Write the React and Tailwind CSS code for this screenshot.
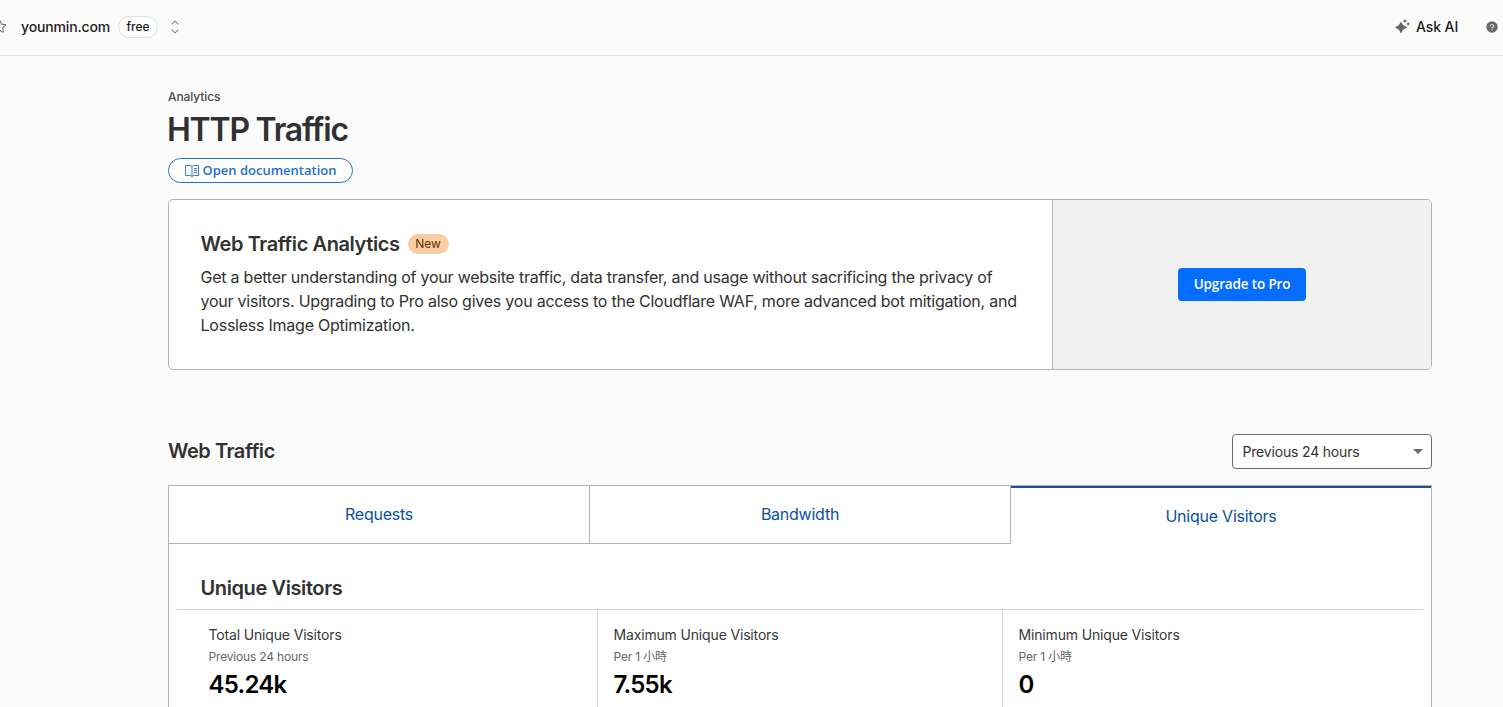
import React, { useState } from 'react';
import { PiStar, PiCaretUpDown, PiQuestionFill } from 'react-icons/pi';

const tabs = ['Requests', 'Bandwidth', 'Unique Visitors'];

const stats = [
  { label: 'Total Unique Visitors', period: 'Previous 24 hours', value: '45.24k' },
  { label: 'Maximum Unique Visitors', period: 'Per 1 小時', value: '7.55k' },
  { label: 'Minimum Unique Visitors', period: 'Per 1 小時', value: '0' },
];

function SparkleIcon() {
  return (
    <svg width="16" height="16" viewBox="0 0 16 16" fill="currentColor">
      <path d="M6 2.4 7.9 5.7Q8.2 6.3 8.8 6.6L12.4 8.4 8.8 10.2Q8.2 10.5 7.9 11.1L6 14.6 4.1 11.1Q3.8 10.5 3.2 10.2L-.2 8.4 3.2 6.6Q3.8 6.3 4.1 5.7Z" />
      <path d="M10 0 10.8 1.3 12.2 2 10.8 2.7 10 4 9.2 2.7 7.8 2 9.2 1.3ZM13.2 2.9 13.9 4.2 15.3 4.9 13.9 5.6 13.2 6.9 12.5 5.6 11.1 4.9 12.5 4.2Z" />
    </svg>
  );
}

function BookIcon() {
  return (
    <svg width="14" height="14" viewBox="0 0 14 14" fill="none" stroke="currentColor" strokeWidth="0.9">
      <path d="M.5 1.5H5.5L7 2.4 8.5 1.5H13.5V11.5H8.5L7 12.3 5.5 11.5H.5ZM7 2.4V13M9 4.5H12M9 6.5H12M9 8.5H12" />
    </svg>
  );
}

function TopBar() {
  return (
    <header className="flex h-14 items-center justify-between border-b border-[#dedede] pb-0.5">
      <div className="-ml-2 flex items-center">
        <PiStar className="size-[15px] text-[#666]" />
        <span className="ml-3.5 w-[89px] text-sm font-medium tracking-[-0.15px] text-[#1d1d1d]">younmin.com</span>
        <span className="ml-2 flex h-[22px] w-10 items-center justify-center rounded-full border border-[#dedede] bg-white text-xs font-medium text-[#1d1d1d]">
          free
        </span>
        <PiCaretUpDown className="ml-[9px] size-4 text-[#777]" />
      </div>
      <div className="flex items-center pr-1">
        <span className="text-[#666]">
          <SparkleIcon />
        </span>
        <span className="ml-[5px] w-[42px] text-sm font-medium tracking-[-0.1px] whitespace-nowrap text-[#1d1d1d]">Ask AI</span>
        <PiQuestionFill className="ml-[27px] size-3.5 text-[#666]" />
      </div>
    </header>
  );
}

function UpgradeCard() {
  return (
    <section className="mt-4 flex h-[171px] overflow-hidden rounded-[5px] border border-[#b3b3b3] bg-white">
      <div className="w-[884px] shrink-0 border-r border-[#b3b3b3] pt-7 pr-8 pl-[31.5px]">
        <div className="flex h-8 items-center">
          <h2 className="text-xl font-semibold tracking-[-0.4px]">Web Traffic Analytics</h2>
          <span className="ml-2 flex h-5 w-[41px] items-center justify-center rounded-full bg-[#fbcda5] text-xs text-[#5c3001]">
            New
          </span>
        </div>
        <p className="mt-[5px] text-base tracking-[-0.235px]">
          Get a better understanding of your website traffic, data transfer, and usage without sacrificing the privacy of
          your visitors. Upgrading to Pro also gives you access to the Cloudflare WAF, more advanced bot mitigation, and
          Lossless Image Optimization.
        </p>
      </div>
      <div className="flex flex-1 items-center justify-center bg-[#f1f1f1]">
        <button className="h-[33px] w-32 rounded-[4px] bg-[#056dff] font-['Open_Sans',sans-serif] text-[13.5px] font-semibold tracking-[-0.15px] text-white">
          Upgrade to Pro
        </button>
      </div>
    </section>
  );
}

function StatTile({ label, period, value }) {
  return (
    <div className="border-l border-[#d5d5d5] pt-[15px] pl-[15.5px] first:border-l-0">
      <p className="text-sm leading-5 tracking-[-0.16px] text-[#36393a]">{label}</p>
      <p className="mt-[3px] text-xs leading-[18px] tracking-[-0.17px] text-[#62676a]">{period}</p>
      <p className="mt-[3px] text-2xl leading-8 font-semibold tracking-[-0.75px] text-black">{value}</p>
    </div>
  );
}

export default function App() {
  const [active, setActive] = useState('Unique Visitors');

  return (
    <div className="h-[707px] w-[1503px] overflow-hidden bg-[#fbfbfb] font-['Inter','Noto_Sans_CJK_TC',sans-serif] text-[#313131]">
      <TopBar />
      <main className="pt-8 pr-[71px] pl-[168px]">
        <p className="text-xs leading-[18px] font-medium tracking-[-0.1px] text-[#4a4a4a]">Analytics</p>
        <h1 className="mt-1 -ml-px text-[32px] leading-10 font-semibold tracking-[-1.24px]">HTTP Traffic</h1>
        <a
          href="#docs"
          className="mt-2 flex h-[25px] w-[185px] items-center justify-center gap-1 rounded-full border border-[#2371cf] bg-white font-['Open_Sans',sans-serif] text-[13px] font-semibold text-[#2371cf]"
        >
          <BookIcon />
          Open documentation
        </a>

        <UpgradeCard />

        <div className="mt-16 flex items-center justify-between">
          <h2 className="pb-0.5 text-xl font-semibold tracking-[-0.45px]">Web Traffic</h2>
          <button className="flex h-[35px] w-[200px] items-center justify-between rounded-[4px] border border-[#6d6d6d] bg-white pr-2 pl-[9.5px] text-sm tracking-[-0.18px]">
            Previous 24 hours
            <svg width="10" height="5" viewBox="0 0 10 5" fill="#6d6d6d">
              <path d="M0 0H10L5 5Z" />
            </svg>
          </button>
        </div>

        <section className="mt-4 border-x border-[#b3b3b3] bg-white">
          <div className="-mx-px grid grid-cols-[422px_421px_421px]">
            {tabs.map((tab) => (
              <button
                key={tab}
                onClick={() => setActive(tab)}
                className={
                  tab === active
                    ? 'h-[59px] border-t border-r border-[#b3b3b3] pt-0.5 text-base tracking-[-0.24px] text-[#0a4fa3] shadow-[inset_0_2px_0_#1d50a0]'
                    : 'h-[59px] border-t border-r border-b border-[#b3b3b3] pb-0.5 text-base tracking-[-0.24px] text-[#0a4fa3] first:border-l'
                }
              >
                {tab}
              </button>
            ))}
          </div>
          <div className="px-2 pt-[29px]">
            <h3 className="pl-[23.5px] text-xl leading-[30px] font-semibold tracking-[-0.4px]">Unique Visitors</h3>
            <div className="mt-1.5 grid h-[120px] grid-cols-[404px_405px_405px] border-t border-[#d5d5d5] pl-4">
              {stats.map((stat) => (
                <StatTile key={stat.label} {...stat} />
              ))}
            </div>
          </div>
        </section>
      </main>
    </div>
  );
}
